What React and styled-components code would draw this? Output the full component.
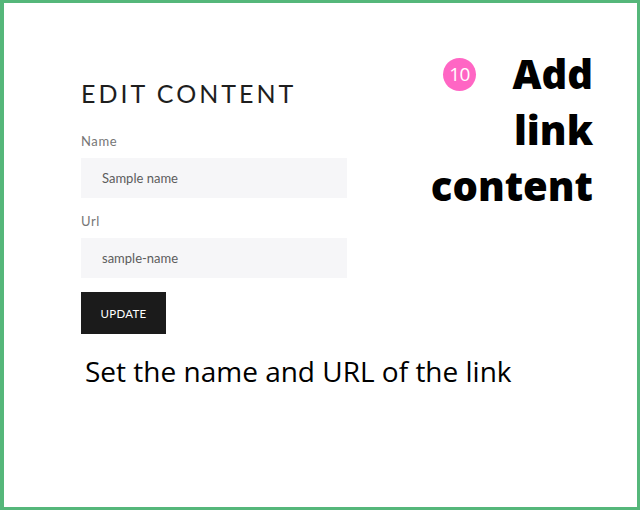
import React from "react";
import styled, { createGlobalStyle } from "styled-components";

const GlobalStyle = createGlobalStyle`
    html, body {
        margin: 0;
        padding: 0;
        background: #ffffff;
    }
    * {
        box-sizing: border-box;
    }
`;

const Frame = styled.div`
    width: 640px;
    height: 510px;
    border-style: solid;
    border-color: #55b77a;
    border-width: 3px 3px 3px 4px;
    background: #ffffff;
    display: flex;
    flex-direction: column;
`;

const TopRow = styled.div`
    display: flex;
    justify-content: space-between;
    align-items: flex-start;
    padding: 0 44px 0 77px;
`;

const Form = styled.div`
    width: 266px;
    padding-top: 78px;
    font-family: Lato, "Liberation Sans", sans-serif;
`;

const Heading = styled.h1`
    margin: 0 0 27px;
    font-size: 25px;
    line-height: 25px;
    font-weight: 400;
    letter-spacing: 3px;
    color: #1e1e1e;
`;

const Label = styled.div`
    font-size: 13px;
    line-height: 16px;
    letter-spacing: 0.6px;
    color: #767676;
    margin-bottom: 9px;
`;

const Field = styled.div`
    height: 40px;
    background: #f6f6f8;
    display: flex;
    align-items: center;
    padding-left: 21px;
    font-size: 13px;
    color: #5c5c5c;
    margin-bottom: ${(p) => p.gap}px;
`;

const Button = styled.div`
    width: 85px;
    height: 42px;
    background: #1b1b1b;
    color: #ffffff;
    display: flex;
    align-items: center;
    justify-content: center;
    font-size: 11.5px;
    font-weight: 400;
    letter-spacing: 0.3px;
`;

const Title = styled.div`
    width: 165px;
    margin-top: 43px;
    text-align: right;
    font-family: "Open Sans", "Liberation Sans", sans-serif;
    font-weight: 800;
    font-size: 40px;
    line-height: 56px;
    color: #000000;
`;

const Badge = styled.span`
    float: left;
    width: 33px;
    height: 33px;
    margin: 12px 0 0 15px;
    border-radius: 50%;
    background: #ff66c4;
    color: #ffffff;
    display: flex;
    align-items: center;
    justify-content: center;
    font-size: 19px;
    font-weight: 400;
    line-height: 1;
    letter-spacing: -0.5px;
`;

const Caption = styled.p`
    margin: 19px 0 0 81px;
    font-family: "Open Sans", "Liberation Sans", sans-serif;
    font-size: 28px;
    line-height: 36px;
    color: #000000;
`;

export default function App() {
    return (
        <>
            <GlobalStyle />
            <Frame>
                <TopRow>
                    <Form>
                        <Heading>EDIT CONTENT</Heading>
                        <Label>Name</Label>
                        <Field gap={15}>Sample name</Field>
                        <Label>Url</Label>
                        <Field gap={14}>sample-name</Field>
                        <Button>UPDATE</Button>
                    </Form>
                    <Title>
                        <Badge>10</Badge>
                        Add link content
                    </Title>
                </TopRow>
                <Caption>Set the name and URL of the link</Caption>
            </Frame>
        </>
    );
}
